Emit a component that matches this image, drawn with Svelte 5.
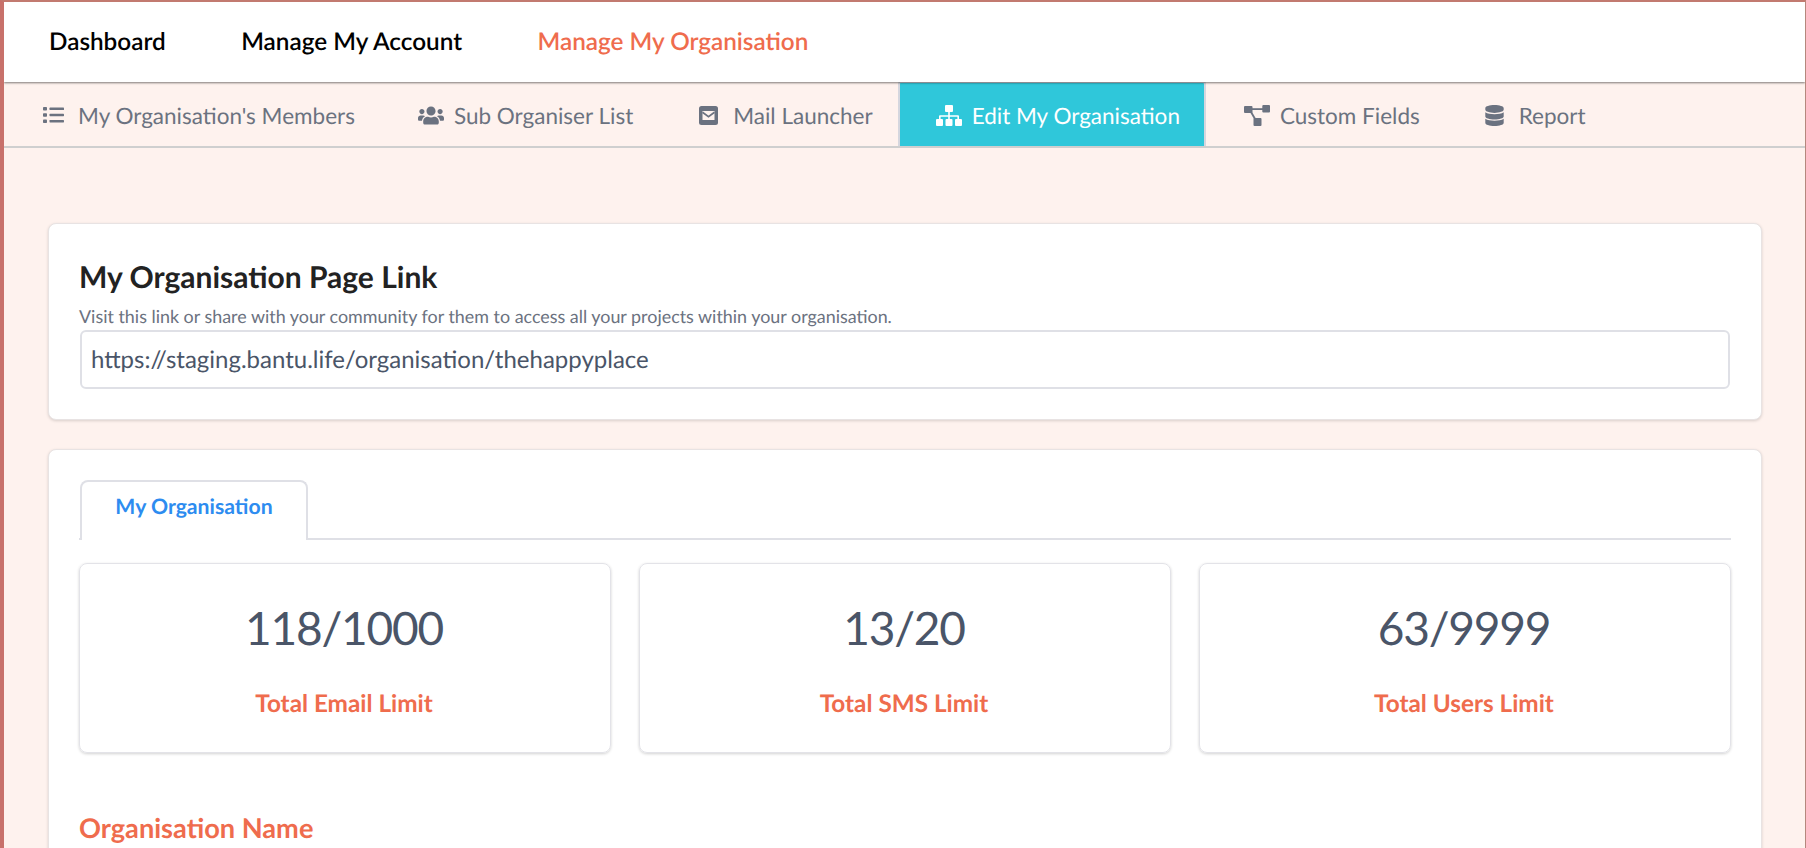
<script>
  const mainLinks = [
    { label: 'Dashboard' },
    { label: 'Manage My Account' },
    { label: 'Manage My Organisation', active: true }
  ];

  const stats = [
    { value: '118/1000', label: 'Total Email Limit' },
    { value: '13/20', label: 'Total SMS Limit' },
    { value: '63/9999', label: 'Total Users Limit' }
  ];
</script>

<div class="frame">
  <nav class="main-nav">
    {#each mainLinks as link}
      <a class="main-link" class:active={link.active} href="#top">{link.label}</a>
    {/each}
  </nav>

  <div class="sub-nav">
    <a class="sub-item members" href="#top">
      <svg class="icon" width="21" height="18" viewBox="0 0 21 18" fill="currentColor">
        <rect x="0" y="1" width="4" height="3.6" rx="0.8" />
        <rect x="0" y="7.2" width="4" height="3.6" rx="0.8" />
        <rect x="0" y="13.4" width="4" height="3.6" rx="0.8" />
        <rect x="6.5" y="1.6" width="14.5" height="2.4" rx="0.6" />
        <rect x="6.5" y="7.8" width="14.5" height="2.4" rx="0.6" />
        <rect x="6.5" y="14" width="14.5" height="2.4" rx="0.6" />
      </svg>
      <span>My Organisation's Members</span>
    </a>
    <a class="sub-item organisers" href="#top">
      <svg class="icon" width="26" height="21" viewBox="0 0 640 512" fill="currentColor">
        <path d="M96 224c35.3 0 64-28.7 64-64s-28.7-64-64-64-64 28.7-64 64 28.7 64 64 64zm448 0c35.3 0 64-28.7 64-64s-28.7-64-64-64-64 28.7-64 64 28.7 64 64 64zm32 32h-64c-17.6 0-33.5 7.1-45.1 18.6 40.3 22.1 68.9 62 75.1 109.4h66c17.7 0 32-14.3 32-32v-32c0-35.3-28.7-64-64-64zm-256 0c61.9 0 112-50.1 112-112S381.9 32 320 32 208 82.1 208 144s50.1 112 112 112zm76.8 32h-8.3c-20.8 10-43.9 16-68.5 16s-47.6-6-68.5-16h-8.3C179.6 288 128 339.6 128 403.2V432c0 26.5 21.5 48 48 48h288c26.5 0 48-21.5 48-48v-28.8c0-63.6-51.6-115.2-115.2-115.2zm-223.7-13.4C161.5 263.1 145.6 256 128 256H64c-35.3 0-64 28.7-64 64v32c0 17.7 14.3 32 32 32h65.9c6.3-47.4 34.9-87.3 75.2-109.4z" />
      </svg>
      <span>Sub Organiser List</span>
    </a>
    <a class="sub-item mail" href="#top">
      <svg class="icon" width="19" height="19" viewBox="0 0 19 19">
        <rect width="19" height="19" rx="2.5" fill="currentColor" />
        <path d="M3.5 5h12v9h-12z" fill="#fef2ee" />
        <path d="M3.5 6.2 9.5 10.6 15.5 6.2" fill="none" stroke="currentColor" stroke-width="1.7" />
      </svg>
      <span>Mail Launcher</span>
    </a>
    <a class="sub-item current" href="#top">
      <svg class="icon" width="26" height="22" viewBox="0 0 26 22" fill="currentColor">
        <rect x="9" y="0" width="8" height="7" rx="1" />
        <rect x="0" y="14" width="7" height="7" rx="1" />
        <rect x="9.5" y="14" width="7" height="7" rx="1" />
        <rect x="19" y="14" width="7" height="7" rx="1" />
        <path d="M12.2 7h1.6v3.2h8.2a1 1 0 0 1 1 1V14h-1.6v-2.2h-7.6V14h-1.6v-2.2H4.6V14H3v-2.8a1 1 0 0 1 1-1h8.2z" />
      </svg>
      <span>Edit My Organisation</span>
    </a>
    <a class="sub-item fields" href="#top">
      <svg class="icon" width="26" height="21" viewBox="0 0 26 21" fill="currentColor">
        <rect x="0" y="1" width="8.5" height="7" rx="1" />
        <rect x="18.3" y="0" width="7.7" height="7.5" rx="1" />
        <rect x="9.5" y="13" width="8" height="8" rx="1" />
        <path d="M8 3.2h11v1.8H8z" />
        <path d="M5.6 6.5 7.2 5.6 12.2 14 10.6 15z" />
      </svg>
      <span>Custom Fields</span>
    </a>
    <a class="sub-item report" href="#top">
      <svg class="icon" width="19" height="21" viewBox="0 0 448 512" fill="currentColor">
        <path d="M448 73.143v45.714C448 159.143 347.667 192 224 192S0 159.143 0 118.857V73.143C0 32.857 100.333 0 224 0s224 32.857 224 73.143zM448 176v102.857C448 319.143 347.667 352 224 352S0 319.143 0 278.857V176c48.125 33.143 136.208 48.572 224 48.572S399.874 209.143 448 176zm0 160v102.857C448 479.143 347.667 512 224 512S0 479.143 0 438.857V336c48.125 33.143 136.208 48.572 224 48.572S399.874 369.143 448 336z" />
      </svg>
      <span>Report</span>
    </a>
  </div>

  <main class="content">
    <section class="card link-card">
      <h2>My Organisation Page Link</h2>
      <p class="hint">Visit this link or share with your community for them to access all your projects within your organisation.</p>
      <input class="link-input" type="text" value="https://staging.bantu.life/organisation/thehappyplace" readonly />
    </section>

    <section class="card org-card">
      <div class="tabs">
        <button class="tab">My Organisation</button>
      </div>

      <div class="stats">
        {#each stats as stat}
          <div class="stat">
            <div class="stat-value">{stat.value}</div>
            <div class="stat-label">{stat.label}</div>
          </div>
        {/each}
      </div>

      <h3 class="field-title">Organisation Name</h3>
    </section>
  </main>
</div>

<style>
  :global(body) {
    margin: 0;
    background: #fef2ee;
    overflow: hidden;
  }

  .frame {
    box-sizing: border-box;
    height: 848px;
    overflow: hidden;
    border-style: solid;
    border-width: 2px 1px 0 4px;
    border-color: #c27a70 #b5887d #c8716b #c8716b;
    background: #fef2ee;
    font-family: Lato, 'Liberation Sans', sans-serif;
    text-rendering: geometricPrecision;
  }

  .main-nav {
    display: flex;
    align-items: center;
    gap: 75.5px;
    height: 80px;
    box-sizing: border-box;
    padding: 0 0 2px 45px;
    background: #fff;
    box-shadow: 0 1px 2px rgba(0, 0, 0, 0.5);
    position: relative;
  }

  .main-link {
    font-size: 24.3px;
    font-weight: 600;
    color: #000;
    text-decoration: none;
  }

  .main-link.active {
    color: #ef6c4d;
  }

  .sub-nav {
    display: flex;
    align-items: stretch;
    height: 66px;
    border-bottom: 2px solid #cfcfcf;
    box-sizing: border-box;
    padding-left: 39px;
  }

  .sub-item {
    display: flex;
    align-items: center;
    padding-top: 2px;
    font-size: 22.5px;
    color: #6b7280;
    text-decoration: none;
  }

  .icon {
    flex-shrink: 0;
  }

  .members .icon {
    margin-right: 14px;
  }

  .organisers {
    margin-left: 63px;
  }

  .organisers .icon {
    margin-right: 10px;
  }

  .mail {
    margin-left: 66px;
  }

  .mail .icon {
    margin-right: 15px;
  }

  .current {
    margin-left: 25px;
    padding: 2px 24px 0 36px;
    color: #fff;
    background: #2fc7da;
    border: 2px solid #d5d6de;
    border-bottom: 0;
    border-radius: 3px 3px 0 0;
    margin-top: -1px;
  }

  .current .icon {
    margin-right: 10px;
  }

  .fields {
    margin-left: 38px;
  }

  .fields .icon {
    margin-right: 10px;
  }

  .report {
    margin-left: 65px;
  }

  .report .icon {
    margin-right: 15px;
  }

  .content {
    padding: 75px 43px 0 44px;
  }

  .card {
    background: #fff;
    border: 1px solid #e8e3e3;
    border-radius: 8px;
    box-shadow: 0 1px 3px rgba(0, 0, 0, 0.15);
  }

  .link-card {
    padding: 36px 30px 30px 30px;
    height: 197px;
    box-sizing: border-box;
  }

  h2 {
    margin: 0;
    font-size: 30px;
    line-height: 34px;
    font-weight: 700;
    color: #222;
  }

  .hint {
    margin: 11px 0 0;
    font-size: 17.9px;
    line-height: 22px;
    color: #6b7280;
  }

  .link-input {
    display: block;
    box-sizing: border-box;
    width: calc(100% - 2px);
    height: 59px;
    margin: 3px 0 0 1px;
    padding: 0 9px;
    border: 2px solid #dfe0e6;
    border-radius: 6px;
    font-family: inherit;
    font-size: 24px;
    color: #4a5568;
    background: #fff;
    outline: none;
    text-rendering: geometricPrecision;
  }

  .org-card {
    margin-top: 29px;
    height: 500px;
    padding: 30px;
    box-sizing: border-box;
  }

  .tabs {
    display: flex;
    border-bottom: 2px solid #dfe0e6;
    height: 60px;
    box-sizing: border-box;
  }

  .tab {
    width: 228px;
    height: 60px;
    margin-left: 1px;
    border: 2px solid #dfe0e6;
    border-bottom: 0;
    border-radius: 8px 8px 0 0;
    background: #fff;
    color: #2d8cf0;
    font-family: inherit;
    font-size: 21.2px;
    font-weight: 700;
    padding: 0 0 10px;
    text-rendering: geometricPrecision;
  }

  .stats {
    display: grid;
    grid-template-columns: repeat(3, 1fr);
    gap: 28px;
    margin-top: 23px;
  }

  .stat {
    height: 190px;
    box-sizing: border-box;
    padding: 36px 2px 0 0;
    text-align: center;
    border: 1px solid #e3e3e8;
    border-radius: 8px;
    box-shadow: 0 1px 3px rgba(0, 0, 0, 0.18);
  }

  .stat-value {
    font-size: 46px;
    line-height: 56px;
    letter-spacing: -1.2px;
    color: #4a5568;
  }

  .stat-label {
    margin-top: 33px;
    font-size: 24.3px;
    line-height: 30px;
    font-weight: 700;
    color: #ef6c4d;
  }

  .field-title {
    margin: 59px 0 0;
    font-size: 27.2px;
    line-height: 32px;
    font-weight: 700;
    color: #ef6c4d;
  }
</style>
